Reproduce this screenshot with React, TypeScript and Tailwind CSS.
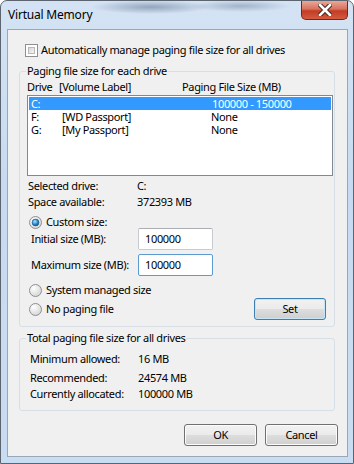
import clsx from 'clsx'
import type { ReactNode } from 'react'

function Radio({ checked }: { checked?: boolean }) {
  return (
    <svg width="13" height="13" viewBox="0 0 13 13" className="shrink-0">
      <defs>
        <radialGradient id="rbg" cx="0.35" cy="0.3" r="0.85">
          <stop offset="0" stopColor="#ffffff" />
          <stop offset="1" stopColor="#cfcfcf" />
        </radialGradient>
        <radialGradient id="rdot" cx="0.4" cy="0.35" r="0.7">
          <stop offset="0" stopColor="#a6e4fc" />
          <stop offset="0.6" stopColor="#2a8ad0" />
          <stop offset="1" stopColor="#0c4a80" />
        </radialGradient>
      </defs>
      <circle cx="6.5" cy="6.5" r="6" fill="url(#rbg)" stroke="#8e8f8f" />
      {checked && <circle cx="6.5" cy="6.5" r="3.4" fill="url(#rdot)" stroke="#174d7c" strokeWidth="0.6" />}
    </svg>
  )
}

function Checkbox() {
  return (
    <div className="w-[13px] h-[13px] shrink-0 border border-[#8e8f8f] bg-white p-[2px]">
      <div className="w-full h-full border border-[#b9b9b9] bg-[linear-gradient(135deg,#d6d6d6,#f6f6f6)]" />
    </div>
  )
}

function Button({ children, className }: { children: ReactNode; className?: string }) {
  return (
    <div
      className={clsx(
        'flex items-center justify-center h-[22px] rounded-[3px] border bg-[linear-gradient(#f2f2f2_0%,#ebebeb_48%,#dddddd_52%,#cfcfcf_100%)]',
        className
      )}
    >
      {children}
    </div>
  )
}

function Input({ value, focused }: { value: string; focused?: boolean }) {
  return (
    <div
      className={clsx(
        'w-[75px] h-[22px] flex items-center pl-[6px] bg-white border rounded-[2px]',
        focused ? 'border-[#5b9bd1]' : 'border-[#c7cbd1] border-t-[#abadb3]'
      )}
    >
      {value}
    </div>
  )
}

export default function App() {
  return (
    <div className="w-[354px] h-[464px] flex flex-col border border-[#5c6470] rounded-t-[7px] bg-[linear-gradient(#d4e3f4,#c6dbf1_40%,#c9ddf2)] font-['Noto_Sans',sans-serif] text-[11px] tracking-[-0.35px] text-black overflow-hidden">
      {/* title bar */}
      <div className="relative h-[28px] shrink-0 bg-[radial-gradient(ellipse_60px_7px_at_150px_6px,rgba(70,90,120,0.45),transparent),radial-gradient(ellipse_50px_6px_at_240px_5px,rgba(70,90,120,0.35),transparent)]">
        <div className="pl-[7px] pt-[6px] text-[12px] leading-[16px] tracking-[-0.2px]">Virtual Memory</div>
        <div className="absolute top-0 right-[5px] w-[47px] h-[19px] rounded-b-[5px] border border-t-0 border-[#6b2a20] bg-[linear-gradient(#e9a89a_0%,#d8715d_45%,#c13d24_55%,#d45a40_100%)] flex items-center justify-center">
          <svg width="14" height="12" viewBox="0 0 14 12">
            <path d="M2 1 L12 11 M12 1 L2 11" stroke="#4a2620" strokeWidth="4.6" strokeLinecap="square" />
            <path d="M2 1 L12 11 M12 1 L2 11" stroke="#ffffff" strokeWidth="2.6" strokeLinecap="square" />
          </svg>
        </div>
      </div>

      {/* client area */}
      <div className="flex-1 ml-[6px] mr-[5px] mb-[6px] border border-[#9aa7b7] bg-[#f0f0f0] flex flex-col pt-[13px]">
        <div className="flex items-center h-[14px] pl-[17px] gap-[3px]">
          <Checkbox />
          <span>Automatically manage paging file size for all drives</span>
        </div>

        <fieldset className="mt-[6px] ml-[11px] w-[316px] border border-[#d5dfe5] rounded-[3px] pl-[7px] pr-[8px] pb-[6px]">
          <legend className="px-[1px] ml-[-1px] leading-[16px]">Paging file size for each drive</legend>
          <div className="flex h-[14px] items-center mt-[1px]">
            <span className="w-[32px]">Drive</span>
            <span className="w-[123px]">[Volume Label]</span>
            <span>Paging File Size (MB)</span>
          </div>
          <div className="mt-[1px] mr-[-7px] h-[81px] border border-[#828790] bg-white px-[1px] pt-[1px] leading-[13px]">
            <div className="flex h-[13px] items-center pl-[2px] bg-[#3399ff] text-white">
              <span className="w-[31px]">C:</span>
              <span className="w-[150px]"></span>
              <span>100000 - 150000</span>
            </div>
            <div className="flex h-[13px] items-center pl-[2px]">
              <span className="w-[31px]">F:</span>
              <span className="w-[149px]">[WD Passport]</span>
              <span>None</span>
            </div>
            <div className="flex h-[13px] items-center pl-[2px]">
              <span className="w-[31px]">G:</span>
              <span className="w-[149px]">[My Passport]</span>
              <span>None</span>
            </div>
          </div>

          <div className="mt-[2px] flex leading-[16px] pl-[1px]">
            <span className="w-[109px]">Selected drive:</span>
            <span>C:</span>
          </div>
          <div className="flex leading-[16px] pl-[1px]">
            <span className="w-[109px]">Space available:</span>
            <span>372393 MB</span>
          </div>

          <div className="mt-[5px] flex items-center h-[14px] pl-[2px] gap-[4px]">
            <Radio checked />
            <span>Custom size:</span>
          </div>
          <div className="mt-[-1px] flex items-center h-[22px] pl-[4px]">
            <span className="w-[107px]">Initial size (MB):</span>
            <Input value="100000" />
          </div>
          <div className="mt-[4px] flex items-center h-[22px] pl-[4px]">
            <span className="w-[107px]">Maximum size (MB):</span>
            <Input value="100000" focused />
          </div>
          <div className="mt-[7px] flex items-center h-[14px] pl-[2px] gap-[4px]">
            <Radio />
            <span>System managed size</span>
          </div>
          <div className="mt-[1px] flex items-center h-[22px] pl-[2px] gap-[4px]">
            <Radio />
            <span>No paging file</span>
            <Button className="ml-auto w-[72px] border-[#3c7fb1] shadow-[inset_0_0_0_1px_#c5e6f8]">Set</Button>
          </div>
        </fieldset>

        <fieldset className="mt-[3px] ml-[11px] w-[316px] border border-[#d5dfe5] rounded-[3px] pl-[10px] pb-[8px]">
          <legend className="px-[1px] ml-[-4px] leading-[16px]">Total paging file size for all drives</legend>
          <div className="mt-[5px] flex leading-[16px]">
            <span className="w-[108px]">Minimum allowed:</span>
            <span>16 MB</span>
          </div>
          <div className="mt-[3px] flex leading-[16px]">
            <span className="w-[108px]">Recommended:</span>
            <span>24574 MB</span>
          </div>
          <div className="flex leading-[16px]">
            <span className="w-[108px]">Currently allocated:</span>
            <span>100000 MB</span>
          </div>
        </fieldset>

        <div className="mt-[13px] flex justify-end gap-[8px] pr-[9px]">
          <Button className="w-[73px] border-[#707070] shadow-[inset_0_0_0_1px_#fcfcfc]">OK</Button>
          <Button className="w-[73px] border-[#707070] shadow-[inset_0_0_0_1px_#fcfcfc]">Cancel</Button>
        </div>
      </div>
    </div>
  )
}
